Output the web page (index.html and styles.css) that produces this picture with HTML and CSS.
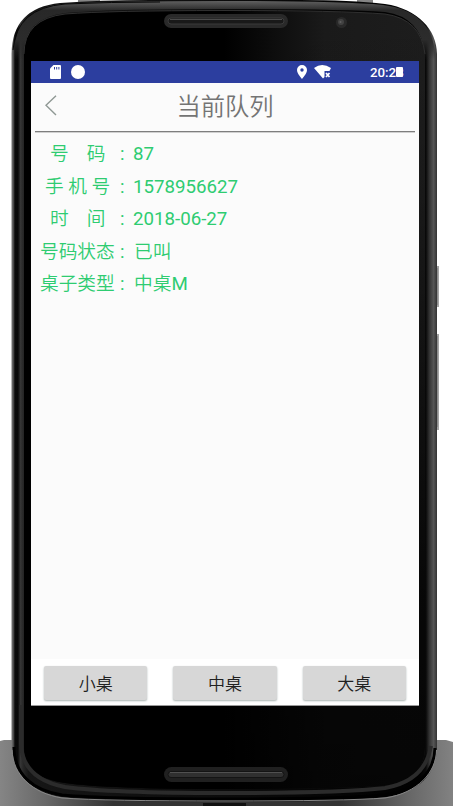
FILE: index.html
```html
<!DOCTYPE html>
<html lang="zh-CN">
<head>
<meta charset="utf-8">
<title>当前队列</title>
<link rel="stylesheet" href="styles.css">
</head>
<body>
<div class="stage">
  <svg class="device" viewBox="0 0 453 806" aria-hidden="true">
    <defs>
      <linearGradient id="rim" x1="0" x2="1" y1="0" y2="0">
        <stop offset="0" stop-color="#777"/><stop offset=".004" stop-color="#555"/><stop offset=".008" stop-color="#0b0b0b"/>
        <stop offset=".015" stop-color="#090909"/><stop offset=".021" stop-color="#353535"/><stop offset=".028" stop-color="#262626"/>
        <stop offset=".04" stop-color="#161616"/><stop offset=".958" stop-color="#000"/><stop offset=".974" stop-color="#090909"/>
        <stop offset=".982" stop-color="#333"/><stop offset=".992" stop-color="#555"/><stop offset="1" stop-color="#333"/>
      </linearGradient>
      <linearGradient id="topRim" gradientUnits="userSpaceOnUse" x1="0" x2="0" y1="1" y2="60">
        <stop offset="0" stop-color="#606060"/><stop offset=".16" stop-color="#282828"/><stop offset=".65" stop-color="#2c2c2c"/><stop offset="1" stop-color="#222" stop-opacity="0"/>
      </linearGradient>
      <linearGradient id="face" x1="0" x2="1" y1="0" y2="0">
        <stop offset="0" stop-color="#000"/><stop offset=".5" stop-color="#000"/><stop offset=".75" stop-color="#1a1a1a"/><stop offset="1" stop-color="#1d1d1d"/>
      </linearGradient>
      <linearGradient id="fade" x1="0" x2="0" y1="0" y2="1">
        <stop offset="0" stop-color="#000" stop-opacity="0"/><stop offset=".2" stop-color="#000" stop-opacity=".1"/><stop offset=".75" stop-color="#000" stop-opacity=".75"/><stop offset="1" stop-color="#000" stop-opacity=".8"/>
      </linearGradient>
      <linearGradient id="base" x1="0" x2="1" y1="0" y2="0">
        <stop offset="0" stop-color="#858585"/><stop offset=".1" stop-color="#686868"/><stop offset=".25" stop-color="#333"/>
        <stop offset=".75" stop-color="#333"/><stop offset=".9" stop-color="#666"/><stop offset="1" stop-color="#828282"/>
      </linearGradient>
    </defs>
    <path d="M0 741L4 740H437L446 740L453 742V806H0Z" fill="url(#base)"/>
    <path d="M436 266h3v41h-3zM436 334h3v96h-3z" fill="#a5a5a5"/>
    <path d="M437 268v37M437 336v91" stroke="#777"/>
    <path d="M78 0h22v3H78zM357 0h16v3h-16z" fill="#858585"/>
    <path d="M11.500 54Q12 8 60 3Q100 0 150 0H300Q350 0 385 4C418 9 437 30 437 54V748C437 773 419 793 386 797Q345 802 225 802Q105 802 62 797C30 793 11.500 771 11.500 748Z" fill="url(#rim)"/>
    <path d="M14 60V51Q16 9 61 4Q110 1 224 1Q340 1 383 5Q432 11 435 54V60H425V54Q421 17 385 12Q340 9 224 9Q105 9 65 13Q24 18 24 54V60Z" fill="url(#topRim)"/>
    <path d="M13 50Q16 8 65 4Q110 2 160 2" fill="none" stroke="#080808"/>
    <path d="M24 54Q24 19 65 14Q110 11 224 11Q340 11 385 14Q421 19 425 54V748Q424 782 382 786Q340 789 224 789Q108 789 65 783C36 779 24 766 24 748Z" fill="url(#face)"/>
    <path d="M24 54Q24 19 65 14Q110 11 224 11Q340 11 385 14Q421 19 425 54V748Q424 782 382 786Q340 789 224 789Q108 789 65 783C36 779 24 766 24 748Z" fill="url(#fade)"/>
    <path d="M24 54Q24 19 65 14Q110 10.500 224 10.500Q340 10.500 385 14Q421 19 425 54" fill="none" stroke="#303030"/>
    <path d="M21 705V744C22 769 39 782 65 787Q110 793 224 793Q340 793 385 788Q425 781 431 746" fill="none" stroke="#2b2b2b" stroke-width="4"/>
    <path d="M14 747C14 774 32 790 62 795Q105 799 225 799Q345 799 385 795C418 791 435 770 435 748" fill="none" stroke="#000" stroke-width="3"/>
    <path d="M12 750C13 775 32 793 62 798Q105 801 225 801Q345 801 385 798C418 793 436.500 772 436.500 750" fill="none" stroke="#888"/>
    <path d="M203 803h43v3h-43z" fill="#111"/>
    <rect x="164" y="14" width="124" height="14" rx="7" fill="#292929"/>
    <rect x="168" y="18" width="116" height="6" rx="3" fill="#191919" stroke="#3b3b3b"/>
    <path d="M170 19.500h112" stroke="#4b4b4b"/>
    <rect x="164" y="767" width="124" height="15" rx="7.500" fill="#202020"/>
    <rect x="168" y="771.500" width="116" height="6" rx="3" fill="#303030" stroke="#141414"/>
    <path d="M170 772.500h112" stroke="#505050"/>
    <circle cx="341.500" cy="22.500" r="5.500" fill="#292929"/><circle cx="341" cy="22" r="3" fill="#424242"/><circle cx="340.500" cy="22" r="1" fill="#606060"/>
  </svg>

  <main class="screen">
    <header class="status">
      <svg class="sd" viewBox="0 0 11 14"><path d="M3.500 0H10q1 0 1 1v12q0 1-1 1H1q-1 0-1-1V3.500Z" fill="#fff"/><path d="M4.500 2v2.500M6.700 2v2.500M8.900 2v2.500" stroke="#2c3e9f" stroke-width="1"/></svg>
      <span class="dot"></span>
      <svg class="pin" viewBox="0 0 10 14"><path fill="#fff" fill-rule="evenodd" d="M5 0a5 5 0 0 1 5 5c0 3.600-5 9-5 9S0 8.600 0 5a5 5 0 0 1 5-5Zm0 3.300a1.700 1.700 0 1 0 0 3.400a1.700 1.700 0 0 0 0-3.400Z"/></svg>
      <svg class="wifi" viewBox="0 0 17 14"><path fill="#fff" d="M0 3Q8-3 17 3L15.500 6H10.500V12L9 13.500Z"/><path d="M12 8l3.500 4M15.500 8L12 12" stroke="#fff" stroke-width="1.700"/></svg>
      <span class="clock">20:28</span>
      <span class="battery"></span>
    </header>
    <div class="titlebar">
      <svg class="back" viewBox="0 0 12 21"><path d="M11 .8L1 10.300L11 20" fill="none" stroke="#8f9894" stroke-width="1.400"/></svg>
      <h1>当前队列</h1>
    </div>
    <section class="details">
      <div class="row"><span class="label two">号 码</span><span class="colon">:</span><span>87</span></div>
      <div class="row"><span class="label three">手机号</span><span class="colon">:</span><span>1578956627</span></div>
      <div class="row"><span class="label two">时 间</span><span class="colon">:</span><span>2018-06-27</span></div>
      <div class="row wide"><span class="label">号码状态</span><span class="colon">:</span><span class="han">已叫</span></div>
      <div class="row wide"><span class="label">桌子类型</span><span class="colon">:</span><span><span class="han">中桌</span>M</span></div>
    </section>
    <footer class="actions">
      <button>小桌</button><button>中桌</button><button>大桌</button>
    </footer>
  </main>
</div>
</body>
</html>
```

FILE: styles.css
```css
* { box-sizing: border-box; }
body { margin: 0; background: #fff; overflow: hidden; font-family: Roboto, "Noto Sans CJK SC", sans-serif; }
.stage { position: relative; width: 453px; height: 806px; padding: 61px 34px 100px 31px; }
.device { position: absolute; inset: 0; width: 453px; height: 806px; }
.screen { position: relative; width: 388px; height: 645px; background: #fbfbfb; display: flex; flex-direction: column; border-bottom: 1px solid #999; }
.status { height: 22px; background: #2c3e9f; display: flex; align-items: center; padding: 0 15px 0 19px; color: #fff; }
.sd { width: 11px; height: 14px; }
.dot { width: 14px; height: 14px; border-radius: 50%; background: #fff; margin-left: 10px; }
.pin { width: 10px; height: 14px; margin-left: 212px; }
.wifi { width: 17px; height: 14px; margin-left: 7px; }
.clock { margin-left: 39px; width: 26px; font-size: 13.3px; font-weight: 500; line-height: 23px; white-space: nowrap; }
.battery { position: relative; width: 7px; height: 10px; border-radius: 1px; background: #fff; }
.titlebar { height: 49px; margin: 0 4px; border-bottom: 1px solid #7e7e7e; box-shadow: 0 1px #d0d0d0; display: grid; grid-template-columns: 30px 1fr 30px; align-items: center; }
.back { width: 12px; height: 21px; margin-left: 10px; margin-bottom: 3px; }
h1 { margin: 0; text-align: center; font-size: 24.3px; line-height: 48px; font-weight: 350; color: #747474; }
.details { flex: 1; padding-top: 6px; color: #2ecc71; font-size: 18.7px; }
.row { height: 32.6px; line-height: 32.6px; display: flex; padding-left: 9px; white-space: nowrap; }
.label { width: 80px; font-weight: 350; }
.han { font-weight: 350; }
.two { padding-left: 10px; word-spacing: 13.5px; }
.three { padding-left: 5px; letter-spacing: 4.6px; }
.colon { width: 13px; }
.wide .colon { width: 14px; }
.actions { height: 46px; background: #fff; display: flex; gap: 26px; padding: 7px 13px 5px; }
button { flex: 1; border: 0; border-radius: 2px; background: #d7d7d7; color: #202020; font: 350 17px/34px Roboto, "Noto Sans CJK SC", sans-serif; padding: 1px 0 0; box-shadow: 0 1px 2px #a9b3b1; }
```
